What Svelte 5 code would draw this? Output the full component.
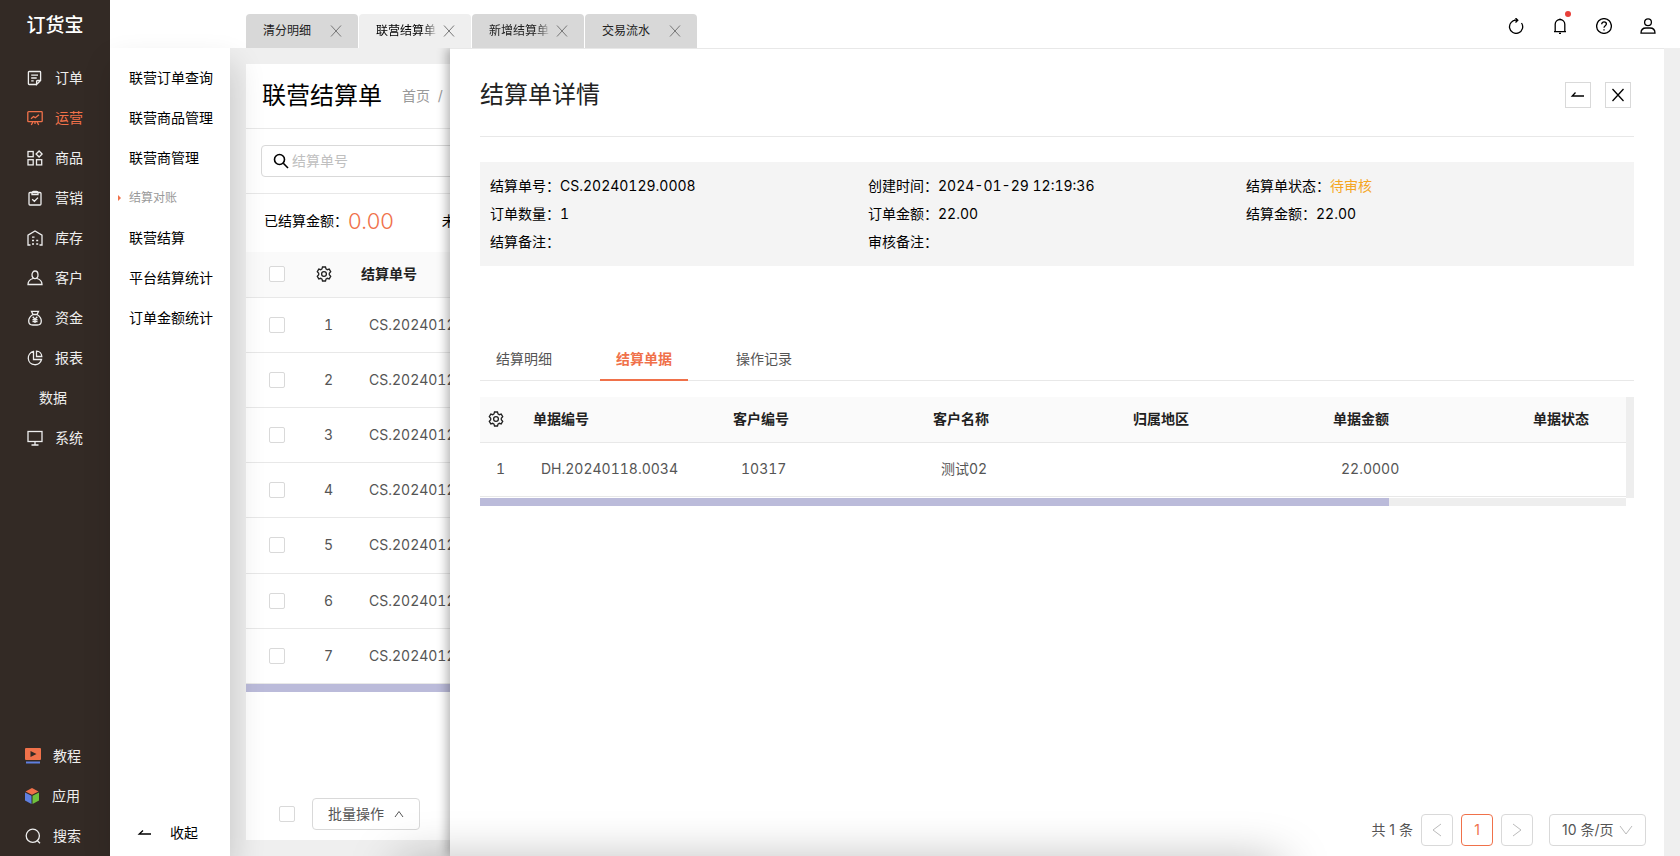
<script>
    let mainMenu = [
        { name: "订单", icon: "order" },
        { name: "运营", icon: "operate" },
        { name: "商品", icon: "goods" },
        { name: "营销", icon: "marketing" },
        { name: "库存", icon: "stock" },
        { name: "客户", icon: "customer" },
        { name: "资金", icon: "fund" },
        { name: "报表", icon: "report" },
        { name: "数据", icon: "" },
        { name: "系统", icon: "system" },
    ];
    let toolMenu = [
        { name: "教程", icon: "course" },
        { name: "应用", icon: "apps" },
        { name: "搜索", icon: "search" },
    ];
    let activeMenu = "运营";

    let subMenu = ["联营订单查询", "联营商品管理", "联营商管理", "结算对账", "联营结算", "平台结算统计", "订单金额统计"];
    let activeSub = "结算对账";

    let pageTabs = ["清分明细", "联营结算单", "新增结算单", "交易流水"];
    let activePage = "联营结算单";

    let keyword = "";
    let rows = [1, 2, 3, 4, 5, 6, 7].map((no) => ({ no, code: "CS.20240129.000" + (9 - no), checked: false }));
    let allChecked = false;

    let detail = [
        { label: "结算单号", value: "CS.20240129.0008" },
        { label: "创建时间", value: "2024-01-29 12:19:36" },
        { label: "结算单状态", value: "待审核", warn: true },
        { label: "订单数量", value: "1" },
        { label: "订单金额", value: "22.00" },
        { label: "结算金额", value: "22.00" },
        { label: "结算备注", value: "" },
        { label: "审核备注", value: "" },
    ];

    let detailTabs = ["结算明细", "结算单据", "操作记录"];
    let activeTab = "结算单据";

    let columns = ["单据编号", "客户编号", "客户名称", "归属地区", "单据金额", "单据状态"];
    let bills = [["DH.20240118.0034", "10317", "测试02", "", "22.0000", ""]];

    let pageSize = "10";

    function toggleAll() {
        rows = rows.map((row) => ({ ...row, checked: allChecked }));
    }
</script>

{#snippet gear()}
    <svg class="icon" viewBox="0 0 16 16">
        <path d="M6.500 1h3l.5 1.900 1.300.8 1.900-.6 1.500 2.600-1.400 1.500v1.600l1.400 1.500-1.500 2.600-1.900-.6-1.300.8-.5 1.900h-3L6 13.100l-1.300-.8-1.900.6-1.500-2.600 1.400-1.500V7.200L1.300 5.700l1.500-2.600 1.900.6L6 2.900z" />
        <circle cx="8" cy="8" r="2.400" />
    </svg>
{/snippet}

{#snippet menuIcon(name)}
    <svg class="icon" viewBox="0 0 16 16">
        {#if name === "order"}
            <path d="M9.500 14.500H2.200a.8.8 0 0 1-.8-.8V2.300a.8.8 0 0 1 .8-.8h10.600a.8.8 0 0 1 .8.8v8.200l-4 4v-3.200a.8.8 0 0 1 .8-.8h3M4.200 5.200h6.800M4.200 8h5.500M4.200 10.800h2.500" />
        {:else if name === "operate"}
            <rect x=".8" y="1.700" width="14.400" height="10" rx=".8" />
            <path d="M4 8.700l2.500-2.200 1.800 1.300L12 4.700M5.800 12l-1.500 3M10.200 12l1.500 3M8 12v2" />
        {:else if name === "goods"}
            <rect x="1" y="1.500" width="5.200" height="5.200" />
            <rect x="1" y="9.700" width="5.200" height="5.200" />
            <rect x="9.500" y="9.700" width="5.200" height="5.200" />
            <path d="M12.100 1l3 3-3 3-3-3z" />
        {:else if name === "marketing"}
            <rect x="2" y="2.500" width="12" height="12.500" rx="1" />
            <path d="M5 4.500V3a1.500 1.500 0 0 1 1.500-1.500h3A1.500 1.500 0 0 1 11 3v1.500zM5.200 9.200l2.200 2.100 3.600-3.700" />
        {:else if name === "stock"}
            <path d="M3.500 15H1V5.200L8 1l7 4.200V15h-2.500M5 7.200h2.500M5 10.500h2M9.200 10.500h2M5 14h2M9.200 14h2" />
        {:else if name === "customer"}
            <ellipse cx="8" cy="4.800" rx="3" ry="3.800" />
            <path d="M6 8.500c-3.500 1-5 2.500-5 6h14c0-3.500-1.500-5-5-6" />
        {:else if name === "fund"}
            <path d="M4.500 1.300h7L10 4.500H6zM6 4.500C3.500 6 1.700 8.200 1.700 11c0 2.700 1.500 4 4 4h4.600c2.500 0 4-1.300 4-4 0-2.800-1.800-5-4.300-6.500M5.700 6.800L8 9.300l2.300-2.500M8 9.300V13M5.500 9.700h5M5.500 11.500h5" />
        {:else if name === "report"}
            <path d="M6.500 1.500a6.700 6.700 0 1 0 8 8h-8zM9.500 1.200v5.300h5.300a5.500 5.500 0 0 0-5.300-5.300z" />
        {:else if name === "system"}
            <rect x="1" y="1.500" width="14" height="10" />
            <path d="M8 11.500V15M4.500 15h7" />
        {:else if name === "course"}
            <rect x="0" y="0" width="16" height="12" rx="1" fill="#f0714a" stroke="none" />
            <path d="M5.500 3v6l6-3z" fill="#332a25" stroke="none" />
            <path d="M1 14.500h14" stroke="#5f7fe0" stroke-width="2" />
        {:else if name === "apps"}
            <path d="M8 0l6.500 3.400L8 6.800 1.500 3.400z" fill="#f0714a" stroke="none" />
            <path d="M1 4.500l6.500 3.300V16L1 12.600z" fill="#5f7fe0" stroke="none" />
            <path d="M15 4.500L8.500 7.800V16l6.500-3.400z" fill="#6fc13d" stroke="none" />
        {:else if name === "search"}
            <circle cx="7.800" cy="7.800" r="6.600" />
            <path d="M12 12.300l3 3" />
        {/if}
    </svg>
{/snippet}

<div class="app">
    <nav class="sidebar">
        <div class="logo">订货宝</div>
        {#each mainMenu as item}
            <a href="#{item.name}" class="menu-item" class:active={item.name === activeMenu} class:plain={!item.icon}>
                {#if item.icon}{@render menuIcon(item.icon)}{/if}
                <span>{item.name}</span>
            </a>
        {/each}
        <div class="tools">
            {#each toolMenu as item}
                <a href="#{item.name}" class="menu-item {item.icon}">
                    {@render menuIcon(item.icon)}
                    <span>{item.name}</span>
                </a>
            {/each}
        </div>
    </nav>

    <div class="right">
        <header class="topbar">
            <div class="page-tabs">
                {#each pageTabs as tab}
                    <div class="page-tab" class:active={tab === activePage}>
                        <a href="#{tab}" class:fade={tab.length > 4}>{tab}</a>
                        <button aria-label="关闭{tab}">
                            <svg viewBox="0 0 12 12"><path d="M1 .5l10 11M11 .5l-10 11" /></svg>
                        </button>
                    </div>
                {/each}
            </div>
            <div class="top-actions">
                <button aria-label="刷新">
                    <svg class="icon" viewBox="0 0 16 16"><path d="M8.500 2.200A6.600 6.600 0 1 0 13.500 5M6 2.200h3.500M7.500 0l2.300 2.200-2.300 2.300" /></svg>
                </button>
                <button aria-label="消息">
                    <svg class="icon" viewBox="0 0 16 16"><path d="M3.200 13.500V6.300a4.800 4.800 0 0 1 9.600 0v7.200M2 13.700h12M7 15.300h2M8 .5v1" /></svg>
                    <i class="dot"></i>
                </button>
                <button aria-label="帮助">
                    <svg class="icon" viewBox="0 0 16 16"><circle cx="8" cy="8" r="7.400" /><path d="M5.700 6.300c0-3.200 4.700-3 4.700-.2 0 1.700-2.400 1.700-2.400 3.700M8 11.200v1.300" /></svg>
                </button>
                <button aria-label="账号">
                    <svg class="icon" viewBox="0 0 16 16"><circle cx="8" cy="4.200" r="3.400" /><path d="M1 15.200c0-3.600 2.300-5.200 5-5.200h4c2.700 0 5 1.600 5 5.200z" /></svg>
                </button>
            </div>
        </header>

        <div class="body">
            <aside class="submenu">
                {#each subMenu as item}
                    <a href="#{item}" class:active={item === activeSub}>{item}</a>
                {/each}
                <button class="collapse">
                    <svg class="icon" viewBox="0 0 16 16"><path d="M14 9H2.200L6 5.500" /></svg>
                    收起
                </button>
            </aside>

            <main class="content">
                <section class="card">
                    <div class="card-title">
                        <h1>联营结算单</h1>
                        <span class="crumb">首页&nbsp; /</span>
                    </div>
                    <div class="search-row">
                        <label class="search-box">
                            <svg class="icon" viewBox="0 0 16 16"><circle cx="6.500" cy="6.500" r="5" /><path d="M10.300 10.300l4.700 4.700" /></svg>
                            <input type="text" aria-label="结算单号" placeholder="结算单号" bind:value={keyword} />
                        </label>
                    </div>
                    <div class="stats">
                        <span>已结算金额：</span><b>0.00</b>
                        <span class="next">未结算金额：</span>
                    </div>
                    <table class="list">
                        <thead>
                            <tr>
                                <th class="check"><input type="checkbox" aria-label="全选" bind:checked={allChecked} on:change={toggleAll} /></th>
                                <th class="no">{@render gear()}</th>
                                <th>结算单号</th>
                            </tr>
                        </thead>
                        <tbody>
                            {#each rows as row}
                                <tr>
                                    <td class="check"><input type="checkbox" aria-label={row.code} bind:checked={row.checked} /></td>
                                    <td class="no">{row.no}</td>
                                    <td>{row.code}</td>
                                </tr>
                            {/each}
                        </tbody>
                    </table>
                    <div class="scroll-x"><div class="thumb" style="width: 80%"></div></div>
                    <div class="batch">
                        <input type="checkbox" aria-label="全选" bind:checked={allChecked} on:change={toggleAll} />
                        <button>
                            批量操作
                            <svg viewBox="0 0 10 8"><path d="M1 7l4-5.500L9 7" /></svg>
                        </button>
                    </div>
                </section>
            </main>

            <section class="drawer">
                <div class="drawer-head">
                    <h2>结算单详情</h2>
                    <button aria-label="返回">
                        <svg class="icon" viewBox="0 0 16 16"><path d="M14 9H2.200L5.500 5.500" /></svg>
                    </button>
                    <button aria-label="关闭">
                        <svg class="icon" viewBox="0 0 16 16"><path d="M2.500 2l11 12M13.500 2l-11 12" /></svg>
                    </button>
                </div>

                <dl class="detail">
                    {#each detail as item}
                        <div>
                            <dt>{item.label}：</dt>
                            <dd class:warn={item.warn}>{item.value}</dd>
                        </div>
                    {/each}
                </dl>

                <div class="detail-tabs">
                    {#each detailTabs as tab}
                        <button class:active={tab === activeTab} on:click={() => (activeTab = tab)}>{tab}</button>
                    {/each}
                </div>

                <div class="bill-wrap">
                    <div class="bill-table">
                        <table>
                            <thead>
                                <tr>
                                    <th class="no">{@render gear()}</th>
                                    {#each columns as column}
                                        <th>{column}</th>
                                    {/each}
                                </tr>
                            </thead>
                            <tbody>
                                {#each bills as bill, index}
                                    <tr>
                                        <td class="no">{index + 1}</td>
                                        {#each bill as cell}
                                            <td>{cell}</td>
                                        {/each}
                                    </tr>
                                {/each}
                            </tbody>
                        </table>
                    </div>
                    <div class="scroll-x"><div class="thumb" style="width: 79.3%"></div></div>
                </div>

                <div class="pagination">
                    <span>共 1 条</span>
                    <button aria-label="上一页"><svg viewBox="0 0 10 14"><path d="M9 1L1 7l8 6" /></svg></button>
                    <button class="current">1</button>
                    <button aria-label="下一页"><svg viewBox="0 0 10 14"><path d="M1 1l8 6-8 6" /></svg></button>
                    <div class="size">
                        <select aria-label="每页条数" bind:value={pageSize}>
                            <option value="10">10 条/页</option>
                            <option value="20">20 条/页</option>
                            <option value="50">50 条/页</option>
                        </select>
                        <svg viewBox="0 0 14 10"><path d="M1 1l6 8 6-8" /></svg>
                    </div>
                </div>
            </section>
        </div>
    </div>
    <div class="foot-shade"></div>
</div>

<style>
    :global(body) {
        margin: 0;
    }

    .app {
        position: relative;
        display: flex;
        height: 100vh;
        overflow: hidden;
        background: #efefef;
        color: #000;
        font-family: Inter, "Noto Sans CJK SC", sans-serif;
        font-size: 14px;
        line-height: 20px;
    }

    a {
        color: inherit;
        text-decoration: none;
    }

    button {
        padding: 0;
        border: none;
        background: none;
        color: inherit;
        font: inherit;
        cursor: pointer;
    }

    svg {
        fill: none;
        stroke: currentColor;
    }

    .icon {
        display: block;
        flex: none;
        width: 16px;
        height: 16px;
        stroke-width: 1.3;
    }

    input[type="checkbox"] {
        display: block;
        appearance: none;
        box-sizing: border-box;
        width: 16px;
        height: 16px;
        margin: 0;
        border: 1px solid #d9d9d9;
        border-radius: 2px;
        background: #fff;
    }

    input[type="checkbox"]:checked {
        background: #f0714a;
    }

    /* Left navigation */
    .sidebar {
        display: flex;
        flex-direction: column;
        flex: none;
        width: 110px;
        background: #332a25;
        color: #eee;
    }

    .logo {
        height: 58px;
        color: #fff;
        font-size: 19px;
        font-weight: 500;
        line-height: 52px;
        text-align: center;
    }

    .menu-item {
        display: flex;
        align-items: center;
        justify-content: center;
        gap: 12px;
        height: 40px;
    }

    .menu-item.active {
        color: #f0714a;
    }

    .menu-item.plain {
        padding-right: 4px;
    }

    .menu-item.apps {
        gap: 12px;
        padding-right: 6px;
    }

    .menu-item.course,
    .menu-item.search {
        padding-right: 4px;
    }

    .tools {
        margin-top: auto;
    }

    .right {
        display: flex;
        flex-direction: column;
        flex: 1;
        min-width: 0;
    }

    /* Top bar */
    .topbar {
        display: flex;
        justify-content: space-between;
        align-items: flex-end;
        flex: none;
        height: 48px;
        padding: 0 24px 0 136px;
        background: #fff;
    }

    .page-tabs {
        display: flex;
        gap: 1px;
    }

    .page-tab {
        display: flex;
        align-items: center;
        justify-content: space-between;
        box-sizing: border-box;
        width: 112px;
        height: 34px;
        padding: 0 16px 0 17px;
        border-radius: 4px 4px 0 0;
        background: #d8d8d8;
        font-size: 12px;
        color: #222;
    }

    .page-tab.active {
        background: #efefef;
        color: #000;
    }

    .page-tab a {
        width: 60px;
        overflow: hidden;
        white-space: nowrap;
    }

    .page-tab .fade {
        mask-image: linear-gradient(to right, #000 48px, transparent 62px);
    }

    .page-tab svg {
        display: block;
        width: 12px;
        height: 12px;
        color: #777;
    }

    .top-actions {
        display: flex;
        gap: 28px;
        padding-bottom: 14px;
    }

    .top-actions button {
        position: relative;
    }

    .dot {
        position: absolute;
        top: -7px;
        right: -3px;
        width: 6px;
        height: 6px;
        border-radius: 50%;
        background: #e8403a;
    }

    .body {
        position: relative;
        display: flex;
        flex: 1;
        min-height: 0;
    }

    /* Second level menu */
    .submenu {
        position: relative;
        z-index: 1;
        display: flex;
        flex-direction: column;
        flex: none;
        box-sizing: border-box;
        width: 120px;
        padding: 10px 0 3px;
        background: #fff;
        box-shadow: 4px 16px 30px rgba(0, 0, 0, 0.16);
    }

    .submenu a {
        padding-left: 19px;
        line-height: 40px;
    }

    .submenu a.active {
        display: flex;
        align-items: center;
        gap: 8px;
        padding-left: 8px;
        color: #999;
        font-size: 12px;
    }

    .submenu a.active::before {
        content: "";
        border: 3px solid transparent;
        border-left-color: #f0714a;
        border-right: none;
    }

    .collapse {
        display: flex;
        align-items: center;
        gap: 17px;
        height: 40px;
        margin-top: auto;
        padding-left: 27px;
    }

    /* List page behind the drawer */
    .content {
        display: flex;
        flex: 1;
        min-width: 0;
        padding: 16px;
    }

    .card {
        display: flex;
        flex-direction: column;
        flex: 1;
        background: #fff;
    }

    .card-title {
        display: flex;
        align-items: center;
        gap: 20px;
        height: 64px;
        padding-left: 16px;
        border-bottom: 1px solid #e8e8e8;
    }

    h1,
    h2 {
        margin: 0;
        font-size: 24px;
        font-weight: 400;
        line-height: 32px;
    }

    .crumb {
        color: #999;
    }

    .search-row {
        padding: 16px 15px;
        border-bottom: 1px solid #e8e8e8;
    }

    .search-box {
        display: flex;
        align-items: center;
        box-sizing: border-box;
        width: 320px;
        height: 32px;
        padding: 0 11px;
        border: 1px solid #d9d9d9;
        border-radius: 4px;
    }

    .search-box .icon {
        stroke-width: 1.6;
    }

    .search-box input {
        flex: 1;
        padding: 0 3px;
        border: none;
        outline: none;
        font: inherit;
    }

    .search-box input::placeholder {
        color: #bfbfbf;
    }

    .stats {
        display: flex;
        align-items: center;
        box-sizing: border-box;
        height: 58px;
        padding: 0 0 4px 18px;
    }

    .stats b {
        color: #f0714a;
        font-size: 22px;
        font-weight: 300;
    }

    .stats .next {
        margin-left: 48px;
    }

    table {
        width: 100%;
        border-collapse: collapse;
        table-layout: fixed;
        color: #555;
        font-variant-numeric: tabular-nums;
    }

    th,
    td {
        box-sizing: border-box;
        padding: 0 16px;
        border-bottom: 1px solid #e8e8e8;
        text-align: left;
        white-space: nowrap;
    }

    th {
        height: 45px;
        padding: 0 8px;
        background: #fafafa;
        color: #222;
        font-weight: 600;
    }

    td {
        height: 54px;
    }

    .no {
        width: 45px;
    }

    .list {
        height: 432px;
    }

    .list .check {
        width: 62px;
        padding: 0 23px;
    }

    .scroll-x {
        height: 8px;
        background: #eee;
    }

    .thumb {
        height: 100%;
        background: #bbbbda;
    }

    .batch {
        display: flex;
        align-items: center;
        gap: 17px;
        margin-top: auto;
        padding: 0 33px 10px;
    }

    .batch button {
        display: flex;
        align-items: center;
        gap: 10px;
        height: 32px;
        padding: 0 15px;
        border: 1px solid #d9d9d9;
        border-radius: 4px;
        box-sizing: border-box;
        color: #555;
    }

    .batch svg {
        width: 10px;
        height: 8px;
    }

    /* Detail drawer */
    .drawer {
        position: absolute;
        z-index: 2;
        top: 0;
        right: 16px;
        bottom: 0;
        left: 340px;
        display: flex;
        flex-direction: column;
        box-sizing: border-box;
        padding: 0 30px 10px;
        border-top: 1px solid #e8e8e8;
        background: #fff;
        box-shadow: -3px 0 10px rgba(0, 0, 0, 0.3);
        clip-path: inset(0 0 0 -20px);
    }

    .drawer-head {
        display: flex;
        align-items: center;
        gap: 14px;
        box-sizing: border-box;
        height: 88px;
        padding: 4px 3px 0 0;
        border-bottom: 1px solid #e8e8e8;
    }

    .drawer-head h2 {
        flex: 1;
        color: #222;
    }

    .drawer-head button {
        display: flex;
        align-items: center;
        justify-content: center;
        box-sizing: border-box;
        width: 26px;
        height: 26px;
        border: 1px solid #d9d9d9;
    }

    .detail {
        display: grid;
        grid-template-columns: repeat(3, 1fr);
        margin: 25px 0 0;
        padding: 10px;
        background: #f4f4f4;
        line-height: 28px;
        font-variant-numeric: tabular-nums;
    }

    .detail div {
        display: flex;
        min-height: 28px;
    }

    .detail dd {
        margin: 0;
    }

    .detail .warn {
        color: #f5a623;
    }

    .detail-tabs {
        display: flex;
        gap: 32px;
        margin-top: 73px;
        border-bottom: 1px solid #e8e8e8;
        color: #555;
    }

    .detail-tabs button {
        height: 42px;
        margin-bottom: -1px;
        padding: 0 16px;
        border-bottom: 2px solid transparent;
    }

    .detail-tabs .active {
        border-color: #f0714a;
        color: #f0714a;
        font-weight: 600;
    }

    .bill-wrap {
        margin-top: 16px;
    }

    .bill-table {
        overflow: hidden;
        border-right: 8px solid #eee;
        padding-bottom: 1px;
    }

    .bill-table table {
        width: 1245px;
    }

    .bill-wrap .scroll-x {
        margin-right: 8px;
    }

    .pagination {
        display: flex;
        align-items: center;
        justify-content: flex-end;
        gap: 8px;
        margin: auto -12px 0 0;
        color: #555;
    }

    .pagination button {
        display: flex;
        align-items: center;
        justify-content: center;
        box-sizing: border-box;
        width: 32px;
        height: 32px;
        border: 1px solid #d9d9d9;
        border-radius: 4px;
    }

    .pagination button svg {
        width: 10px;
        height: 14px;
        color: #bbb;
    }

    .pagination .current {
        border-color: #f0714a;
        color: #f0714a;
    }

    .size {
        display: flex;
        align-items: center;
        box-sizing: border-box;
        height: 32px;
        margin-left: 8px;
        padding: 0 12px;
        border: 1px solid #d9d9d9;
        border-radius: 4px;
    }

    .size select {
        appearance: none;
        padding: 0 2px 0 0;
        border: none;
        background: none;
        color: inherit;
        font: inherit;
    }

    .size svg {
        width: 14px;
        height: 10px;
        color: #bbb;
    }

    .foot-shade {
        position: absolute;
        z-index: 3;
        right: 400px;
        bottom: -40px;
        left: 400px;
        height: 30px;
        box-shadow: 0 0 50px rgba(0, 0, 0, 0.4);
        pointer-events: none;
    }
</style>
